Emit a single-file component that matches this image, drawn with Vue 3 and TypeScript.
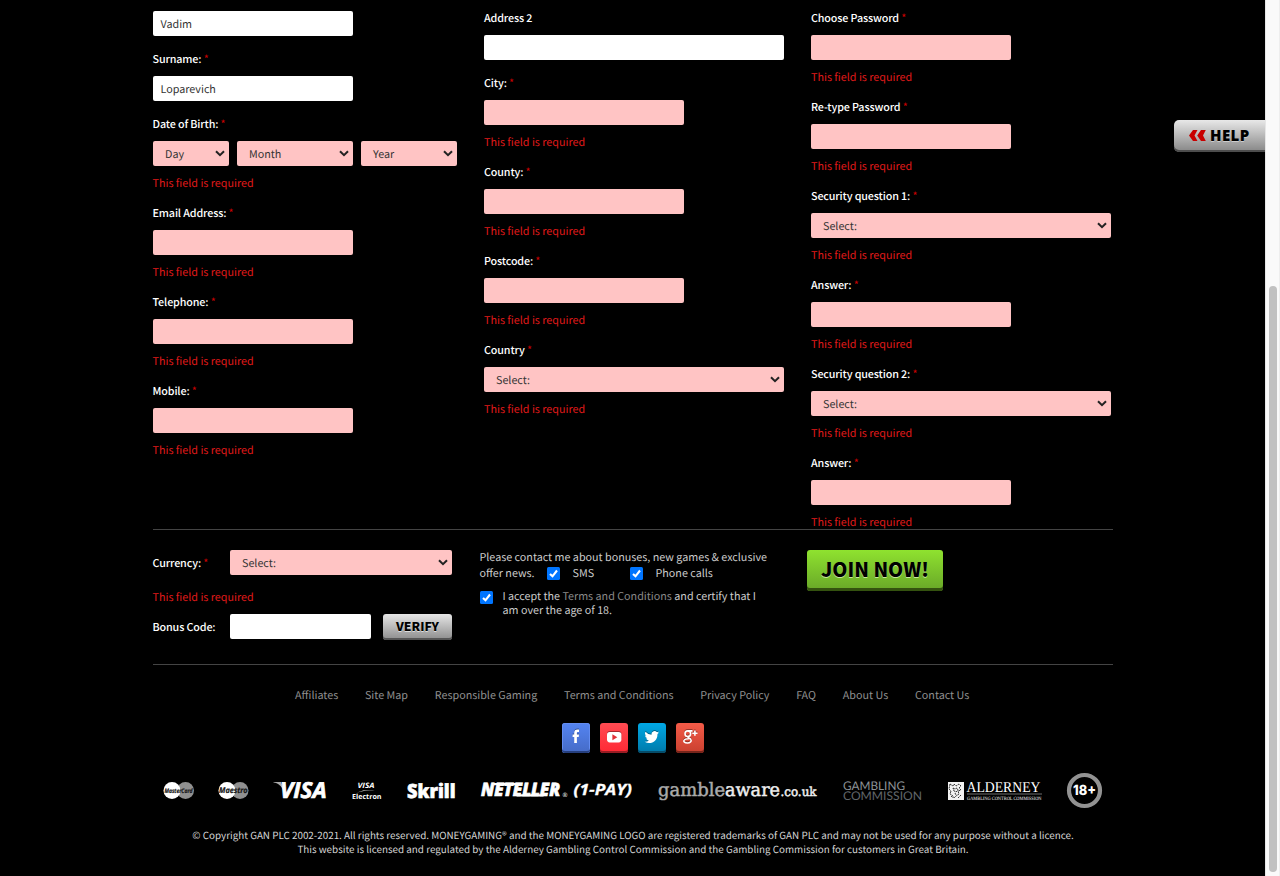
<script setup lang="ts">
interface Control {
  kind: 'input' | 'select'
  width: number
  text?: string
}
interface Field {
  label?: string
  required?: boolean
  error?: boolean
  controls: Control[]
}

const input = (width: number, text = ''): Control => ({ kind: 'input', width, text })
const select = (width: number, text = 'Select:'): Control => ({ kind: 'select', width, text })
const required = (label: string, ...controls: Control[]): Field => ({ label, required: true, error: true, controls })

const columns: Field[][] = [
  [
    { controls: [input(200, 'Vadim')] },
    { label: 'Surname:', required: true, controls: [input(200, 'Loparevich')] },
    required('Date of Birth:', select(76, 'Day'), select(116, 'Month'), select(96, 'Year')),
    required('Email Address:', input(200)),
    required('Telephone:', input(200)),
    required('Mobile:', input(200)),
  ],
  [
    { label: 'Address 2', controls: [input(300)] },
    required('City:', input(200)),
    required('County:', input(200)),
    required('Postcode:', input(200)),
    required('Country', select(300)),
  ],
  [
    required('Choose Password', input(200)),
    required('Re-type Password', input(200)),
    required('Security question 1:', select(300)),
    required('Answer:', input(200)),
    required('Security question 2:', select(300)),
    required('Answer:', input(200)),
  ],
]

const links: string[] = [
  'Affiliates', 'Site Map', 'Responsible Gaming', 'Terms and Conditions',
  'Privacy Policy', 'FAQ', 'About Us', 'Contact Us',
]
</script>

<template>
  <div class="window">
    <div class="page">
      <main class="content">
        <section class="columns">
          <div v-for="(column, c) in columns" :key="c" class="column">
            <div v-for="(field, f) in column" :key="f" class="field">
              <label v-if="field.label" class="label">{{ field.label }}<span v-if="field.required" class="star"> *</span></label>
              <div class="controls">
                <div
                  v-for="(control, k) in field.controls"
                  :key="k"
                  class="control"
                  :class="[control.kind, { invalid: field.error }]"
                  :style="{ width: control.width + 'px' }"
                >
                  <span>{{ control.text }}</span>
                  <svg v-if="control.kind === 'select'" class="chevron" viewBox="0 0 10 7"><path d="M1 1.2 5 5.2 9 1.2" /></svg>
                </div>
              </div>
              <div v-if="field.error" class="error">This field is required</div>
            </div>
          </div>
        </section>

        <section class="finish">
          <div class="money">
            <div class="row">
              <label class="label side">Currency:<span class="star"> *</span></label>
              <div class="control select invalid currency">
                <span>Select:</span>
                <svg class="chevron" viewBox="0 0 10 7"><path d="M1 1.2 5 5.2 9 1.2" /></svg>
              </div>
            </div>
            <div class="error money-error">This field is required</div>
            <div class="row">
              <label class="label side">Bonus Code:</label>
              <div class="control input bonus"></div>
              <button class="verify">VERIFY</button>
            </div>
          </div>
          <div class="consent">
            <div class="contact">
              Please contact me about bonuses, new games &amp; exclusive
              <div class="options">
                <span class="offer">offer news.</span>
                <svg class="check" viewBox="0 0 13 13"><rect width="13" height="13" rx="1.5" /><path d="M3 6.9 5.5 9.3 10 3.5" /></svg>
                <span class="sms">SMS</span>
                <svg class="check" viewBox="0 0 13 13"><rect width="13" height="13" rx="1.5" /><path d="M3 6.9 5.5 9.3 10 3.5" /></svg>
                <span class="phone">Phone calls</span>
              </div>
            </div>
            <div class="accept">
              <svg class="check" viewBox="0 0 13 13"><rect width="13" height="13" rx="1.5" /><path d="M3 6.9 5.5 9.3 10 3.5" /></svg>
              <div>I accept the <a>Terms and Conditions</a> and certify that I<br />am over the age of 18.</div>
            </div>
          </div>
          <button class="join">JOIN NOW!</button>
        </section>

        <footer>
          <nav class="links"><a v-for="link in links" :key="link">{{ link }}</a></nav>
          <div class="social">
            <span class="tile facebook">
              <svg viewBox="0 0 28 28"><path d="M12.2 20v-6H10.6v-2.6h1.6V9.8c0-2.3 1.2-3.4 3.2-3.4h1.6V9h-1.1c-.8 0-1 .4-1 1v1.4H17l-.3 2.6h-1.8v6z" /></svg>
            </span>
            <span class="tile youtube">
              <svg viewBox="0 0 28 28"><rect x="7" y="9" width="14.4" height="10.4" rx="2.8" /><path class="play" d="M12.4 11.2v6l4.9-3z" /></svg>
            </span>
            <span class="tile twitter">
              <svg viewBox="0 0 28 28"><path d="M21 9.5a6 6 0 0 1-1.7.5c.6-.4 1.1-1 1.3-1.6-.6.3-1.2.6-1.9.7a3 3 0 0 0-5.1 2.7A8.400 8.400 0 0 1 7.500 8.700a3 3 0 0 0 .9 4c-.5 0-.9-.2-1.300-.4 0 1.500 1 2.700 2.400 3-.5.1-.9.100-1.400 0 .4 1.200 1.500 2.100 2.800 2.100A6 6 0 0 1 6.600 18.700c5.700 3.300 13 .2 12.900-7.700.6-.400 1.100-.9 1.500-1.500z" /></svg>
            </span>
            <span class="tile google">
              <svg viewBox="0 0 28 28">
                <g class="outline"><ellipse cx="11.800" cy="10.700" rx="2.800" ry="2.800" /><path d="M12 7.900h4.500M12.800 13.200c-2.300 1.400 1.200 1.900 2 3.200 1.300 2-.9 3.700-3.500 3.600-2.500-.1-4.200-1.500-3.200-2.900.8-1.200 2.600-1.500 4.700-1.400M18.900 7.600v5.200M16.300 10.200h5.200" /></g>
              </svg>
            </span>
          </div>

          <svg class="logos" viewBox="0 0 960 40">
            <circle cx="32.500" cy="20.500" r="8.500" fill="#909090" />
            <circle cx="19" cy="20.500" r="8.500" />
            <text x="11.500" y="22.900" textLength="28" lengthAdjust="spacingAndGlyphs" class="brand" font-size="6.200">MasterCard</text>
            <circle cx="87" cy="20.500" r="8.500" fill="#909090" />
            <circle cx="74" cy="20.500" r="8.500" />
            <text x="66" y="23.300" textLength="28.500" lengthAdjust="spacingAndGlyphs" class="brand" font-size="8">Maestro</text>
            <path d="M120.500 12h7.500l4 10-2-2c-1.500-4-5-7-9.500-7.500z" fill="#aaa" />
            <text x="127" y="28.300" textLength="46.500" lengthAdjust="spacingAndGlyphs" class="sans heavy" font-size="22" font-weight="700" font-style="italic">VISA</text>
            <text x="204.500" y="17.800" textLength="17" lengthAdjust="spacingAndGlyphs" class="sans" font-size="7.500" font-weight="700" font-style="italic">VISA</text>
            <path d="M204 22.500c6-2.700 12-3 18-2.200-6-.1-12 .4-18 2.200z" />
            <text x="199" y="28.600" textLength="29.500" lengthAdjust="spacingAndGlyphs" class="sans" font-size="7" font-weight="700">Electron</text>
            <text x="254" y="28.300" textLength="48.500" lengthAdjust="spacingAndGlyphs" class="sans skrill" font-size="19.500" font-weight="800">Skrill</text>
            <text x="328" y="26.300" textLength="79" lengthAdjust="spacingAndGlyphs" class="sans heavy" font-size="18.500" font-weight="800" font-style="italic">NETELLER</text>
            <path d="M341 13h25l-.5 2.200h-25zM364 24.200h27l-.5 2.200h-27z" />
            <text x="409.500" y="27" class="sans" font-size="6">®</text>
            <text x="420.500" y="25.300" textLength="58.500" lengthAdjust="spacingAndGlyphs" class="sans pay" font-size="15.500" font-weight="700" font-style="italic">(1-PAY)</text>
            <text x="505" y="26" textLength="67" lengthAdjust="spacingAndGlyphs" class="slab muted" font-size="18.500">gamble</text>
            <text x="572" y="26" textLength="55" lengthAdjust="spacingAndGlyphs" class="slab" font-size="18.500">aware</text>
            <text x="627.500" y="26" textLength="36" lengthAdjust="spacingAndGlyphs" class="slab" font-size="12.500">.co.uk</text>
            <text x="690" y="19.600" textLength="62" lengthAdjust="spacingAndGlyphs" class="lato" font-size="12" fill="#8d9396">GAMBLING</text>
            <text x="690" y="29.900" textLength="79" lengthAdjust="spacingAndGlyphs" class="lato" font-size="12" fill="#62676a">COMMISSION</text>
            <rect x="795" y="12" width="16" height="18" fill="#f2f2f2" />
            <path d="M797 14l3 2 1-2 2 2 3-2 2 2-2 2 2 2-3 1 1 3-3 2-2 2-2-3-2-1 1-3-2-2zM800 18l2 1 2-1 1 2-2 2-2-1zM802 23l1 2M798 26l2 2M808 25l-3 3" fill="none" stroke="#222" stroke-width=".9" stroke-dasharray="2 .7" />
            <text x="813.500" y="22" textLength="74" lengthAdjust="spacingAndGlyphs" class="roman" font-size="15">ALDERNEY</text>
            <path d="M814 24h75" stroke="#888" stroke-width=".8" />
            <text x="814" y="29.500" textLength="74.500" lengthAdjust="spacingAndGlyphs" class="roman" font-size="5">GAMBLING CONTROL COMMISSION</text>
            <circle cx="931.500" cy="20.500" r="15.500" fill="none" stroke="#929292" stroke-width="4.200" />
            <text x="920" y="25.300" textLength="23" lengthAdjust="spacingAndGlyphs" class="inter" font-size="14" font-weight="800">18+</text>
          </svg>

          <p class="legal">
            <span>© Copyright GAN PLC 2002-2021. All rights reserved. MONEYGAMING® and the MONEYGAMING LOGO are registered trademarks of GAN PLC and may not be used for any purpose without a licence.</span>
            <span>This website is licensed and regulated by the Alderney Gambling Control Commission and the Gambling Commission for customers in Great Britain.</span>
          </p>
        </footer>
      </main>
      <button class="help">
        <svg viewBox="0 0 17 11"><path d="M4 0h4.500L5.500 5.500l3 5.500H4L0 5.500zM12 0h4.800L14 5.500l2.800 5.500H12L8.200 5.500z" /></svg>
        <span>HELP</span>
      </button>
    </div>
    <aside class="scrollbar"><div class="thumb"></div></aside>
  </div>
</template>

<style>
body { margin: 0; background: #000; overflow: hidden; }
</style>

<style scoped>
* { box-sizing: border-box; }
.window {
  display: flex; width: 1280px; height: 876px; overflow: hidden; background: #000;
  font-family: "Noto Sans CJK SC", "Noto Sans", sans-serif; font-size: 10.760px; color: #ccc;
  text-rendering: geometricPrecision;
}
.page { position: relative; width: 1265px; flex: none; }
.content { width: 960px; margin-left: 153px; }
.columns { display: grid; grid-template-columns: 331px 327px 302px; height: 529px; padding-top: 1px; }
.column:first-child { padding-top: 10px; }
.column:first-child .label, .column:first-child .error, .money .label, .money .error { text-indent: -.5px; }
.label { display: block; height: 34px; line-height: 35px; color: #fff; font-weight: 500; white-space: pre; letter-spacing: -.13px; }
.star { color: #c00; font-weight: 400; }
.controls { display: flex; gap: 8px; margin-bottom: 6px; }
.field:has(.error) .controls { margin-bottom: 0; }
.control {
  display: flex; align-items: center; justify-content: space-between; height: 25px;
  border-radius: 2px; background: #fff; color: #333; padding: 0 4px 0 7.500px; line-height: 25px;
}
.control span { padding-top: 1px; }
.invalid { background: #ffc4c4; }
.select { padding-left: 12px; }
.chevron { width: 10px; height: 7px; fill: none; stroke: #222; stroke-width: 2; }
.error { height: 30px; line-height: 35px; color: #e01a1a; white-space: nowrap; }

.finish {
  display: grid; grid-template-columns: 326.500px 327.500px 306px; align-items: start;
  height: 136px; padding-top: 20px; border-top: 1px solid #444; border-bottom: 1px solid #444;
}
.row { display: flex; height: 25px; }
.side { width: 77px; line-height: 27px; height: 25px; flex: none; }
.currency { width: 222px; }
.money-error { height: 39px; line-height: 45px; }
.bonus { width: 141px; }
button { border: 0; padding: 0; font-family: inherit; font-weight: 700; color: #000; white-space: nowrap; }
.verify {
  width: 69px; height: 26px; margin-left: 12px; padding-bottom: 2px; border-radius: 3px; font-size: 12.200px; font-weight: 900; line-height: 22px;
  background: linear-gradient(#e6e6e6, #8c8c8c); box-shadow: inset 0 -2px #555; text-shadow: 0 1px #ddd;
}
.contact { line-height: 16px; white-space: nowrap; }
.options { display: flex; align-items: center; height: 16px; }
.options .check { margin-top: -2px; }
.offer { width: 67.500px; }
.sms { width: 57.500px; }
.check { width: 13px; height: 13px; flex: none; fill: #0075ff; }
.check path { fill: none; stroke: #fff; stroke-width: 2.100; }
.sms, .phone { margin-left: 12.500px; }
.accept { display: flex; gap: 10px; margin-top: 8px; line-height: 14px; white-space: nowrap; }
.accept .check { margin-top: 1px; }
.accept a { color: #8a8a8a; }
.join {
  width: 136px; height: 41px; padding-bottom: 3px; border-radius: 3px; font-size: 19.300px; font-weight: 800; line-height: 36px;
  background: linear-gradient(#8fe22f, #68a628); box-shadow: inset 0 -3px #34520f; text-shadow: 0 1px #c7e99b;
}

.links { display: flex; gap: 26.750px; margin: 22px 0 0 142px; height: 18px; line-height: 18px; color: #909090; white-space: nowrap; }
.social { display: flex; gap: 10px; margin: 18px 0 0 409px; }
.tile { width: 28px; height: 30px; border-radius: 3px; overflow: hidden; }
.tile svg { display: block; width: 28px; height: 28px; fill: #fff; filter: drop-shadow(0 -1px 0 rgba(0, 0, 0, .35)); }
.facebook { background: linear-gradient(#5484f2, #456bc6); box-shadow: inset 0 -2px #263f7e, inset 0 0 0 1px #638cf0; }
.youtube { background: linear-gradient(#ff4b52, #ff2834); box-shadow: inset 0 -2px #981c23; }
.youtube .play { fill: #e03038; }
.twitter { background: linear-gradient(#00a8e5, #0079a9); box-shadow: inset 0 -2px #064c69; }
.google { background: linear-gradient(#f45b48, #c9402f); box-shadow: inset 0 -2px #77251b; }
.outline { fill: none; stroke: #fff; stroke-width: 1.600; }
.logos { display: block; width: 960px; height: 40px; margin-top: 17px; fill: #fff; }
.sans { font-family: "Open Sans", "Noto Sans", sans-serif; }
.heavy { stroke: #fff; stroke-width: .7px; }
.skrill { stroke: #fff; stroke-width: .6px; }
.pay { stroke: #fff; stroke-width: .3px; }
.brand { font-family: "Open Sans", sans-serif; font-weight: 700; font-style: italic; fill: #151515; stroke: #151515; stroke-width: .2px; }
.slab { font-family: "DejaVu Serif", serif; fill: #eee; stroke: #eee; stroke-width: .5px; }
.muted { fill: #aaa; stroke: #aaa; }
.lato { font-family: Lato, sans-serif; }
.roman { font-family: "Liberation Serif", serif; }
.inter { font-family: Inter, sans-serif; }
.legal { display: flex; flex-direction: column; align-items: center; margin: 18px 0 0; font-size: 9.860px; line-height: 14px; white-space: nowrap; color: #d6d6d6; }

.help {
  position: absolute; right: 0; top: 120px; display: flex; align-items: center; width: 91px; height: 32px;
  padding: 0 0 2px 15px; border-radius: 5px 0 0 5px; background: linear-gradient(#e8e8e8, #858585);
  box-shadow: inset 0 -2px #4d4d4d; font-family: "Open Sans", "Noto Sans", sans-serif; font-size: 15px; font-weight: 800; letter-spacing: .4px; text-shadow: 0 1px #ccc;
}
.help svg { width: 17px; height: 11px; margin-right: 4px; fill: #c80000; }
.scrollbar { width: 15px; padding: 286px 0 0 4px; background: #fafafa; border-left: 1px solid #e6e6e6; border-right: 1px solid #eee; }
.thumb { width: 8px; height: 586px; margin-left: -1px; border-radius: 4px; background: #c1c1c1; }
</style>
